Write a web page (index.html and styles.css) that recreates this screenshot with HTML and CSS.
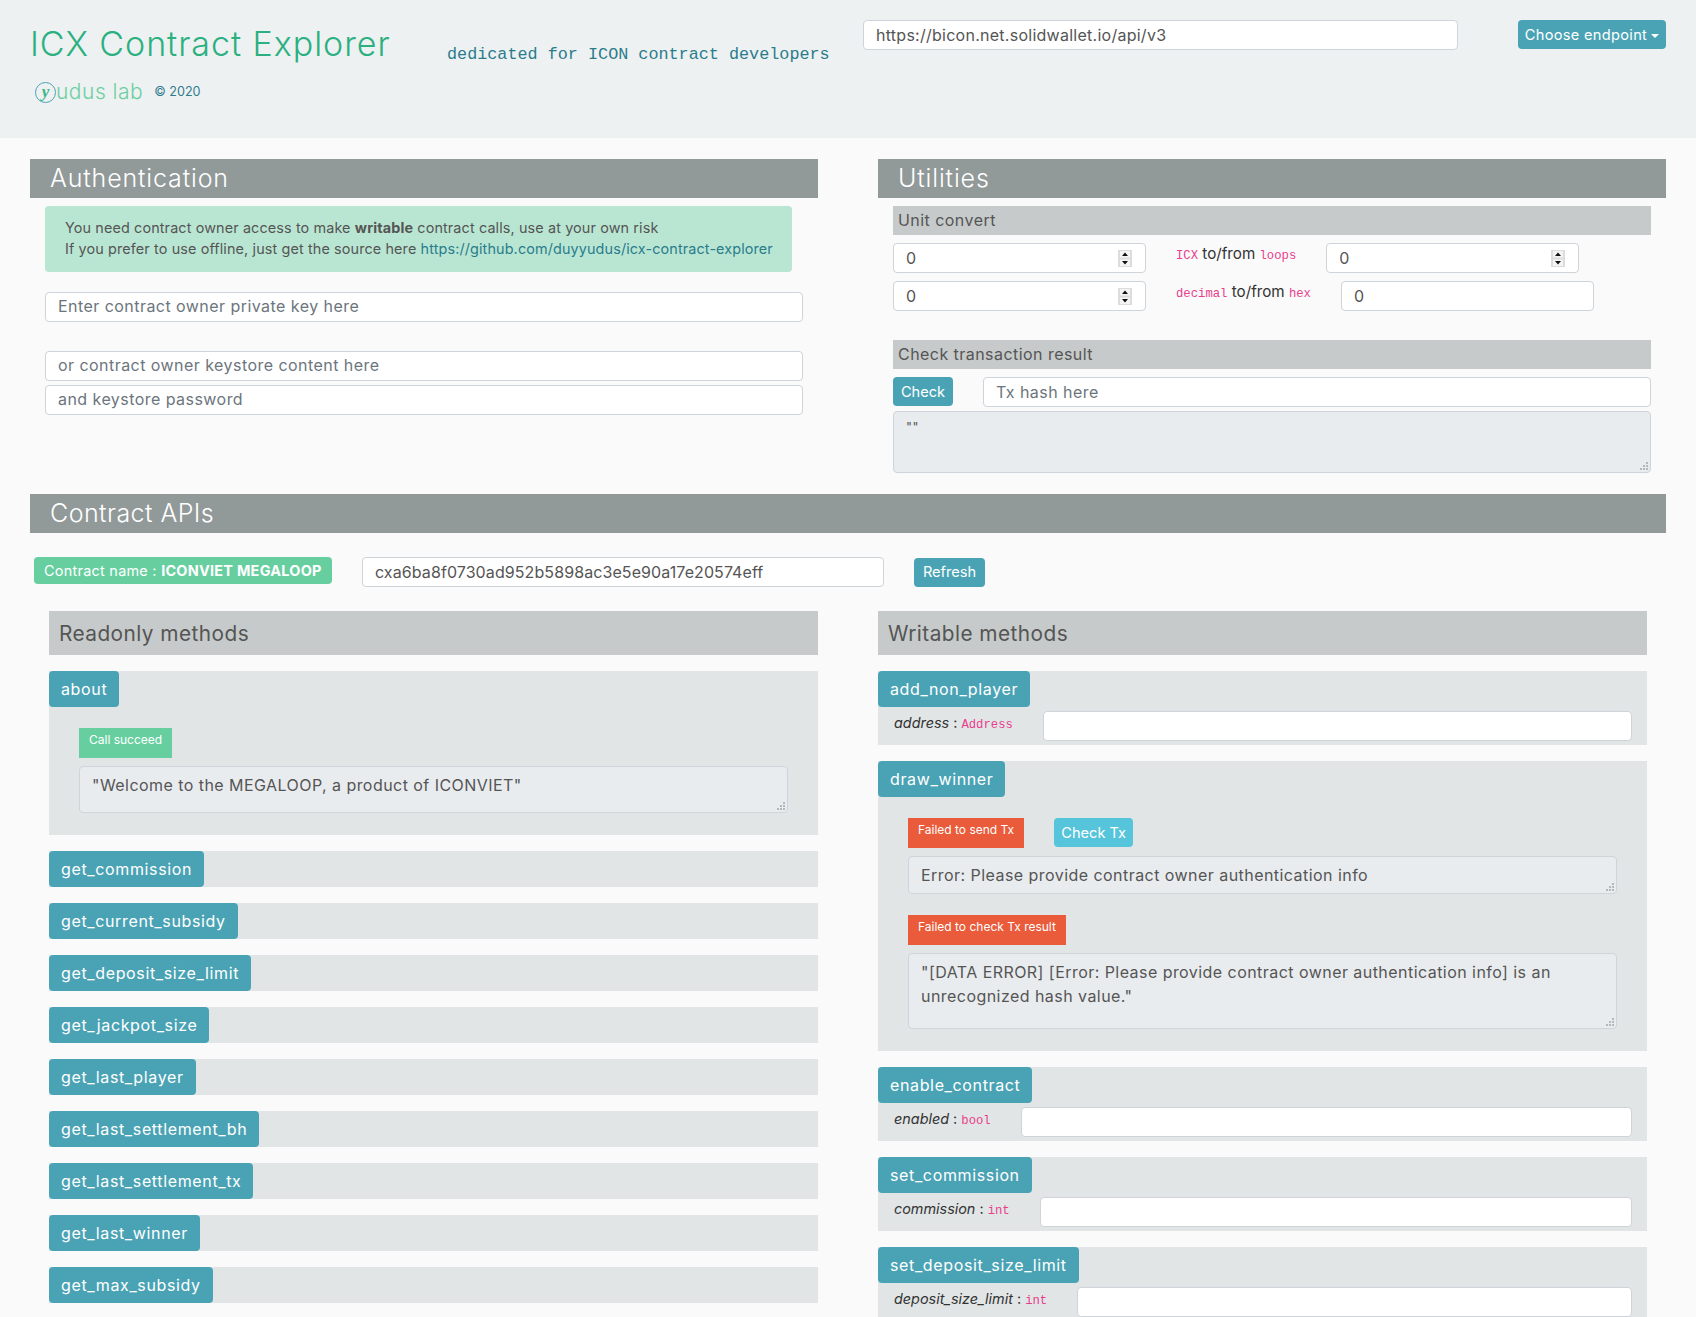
FILE: index.html
```html
<!DOCTYPE html>
<html lang="en">
<head>
<meta charset="utf-8">
<title>ICX Contract Explorer</title>
<link rel="stylesheet" href="styles.css">
</head>
<body>
<header class="top">
  <div class="brand">
    <h1 class="title">ICX Contract Explorer</h1>
    <div class="lab">
      <span class="lab-mark">y</span><span class="lab-name">udus lab</span>
      <small class="copy">© 2020</small>
    </div>
  </div>
  <div class="tagline">dedicated for ICON contract developers</div>
  <input class="field endpoint" type="text" value="https://bicon.net.solidwallet.io/api/v3">
  <button class="btn choose" type="button">Choose endpoint<span class="caret"></span></button>
</header>

<main class="page">
  <div class="cols first">
    <section>
      <h2 class="bar">Authentication</h2>
      <div class="auth">
        <div class="alert">You need contract owner access to make <b>writable</b> contract calls, use at your own risk<br>If you prefer to use offline, just get the source here <a href="#">https://github.com/duyyudus/icx-contract-explorer</a></div>
        <input class="field key" type="text" placeholder="Enter contract owner private key here">
        <input class="field store" type="text" placeholder="or contract owner keystore content here">
        <input class="field pass" type="text" placeholder="and keystore password">
      </div>
    </section>
    <section>
      <h2 class="bar">Utilities</h2>
      <div class="utils">
        <h3 class="sub">Unit convert</h3>
        <div class="conv">
          <div class="spin-wrap">
            <input class="field num" type="number" value="0">
            <svg class="spin" viewBox="0 0 14 17" width="14" height="17" aria-hidden="true"><rect width="14" height="17" fill="#dcdcdc"/><rect x="2" y="1" width="10" height="6.5" fill="#f4f4f4"/><rect x="2" y="9.5" width="10" height="6.5" fill="#f4f4f4"/><path d="M7 2.5 10 6H4z" fill="#111"/><path d="M7 14.5 10 11H4z" fill="#111"/></svg>
          </div>
          <span class="conv-label"><code>ICX</code> to/from <code>loops</code></span>
          <div class="spin-wrap">
            <input class="field num" type="number" value="0">
            <svg class="spin" viewBox="0 0 14 17" width="14" height="17" aria-hidden="true"><rect width="14" height="17" fill="#dcdcdc"/><rect x="2" y="1" width="10" height="6.5" fill="#f4f4f4"/><rect x="2" y="9.5" width="10" height="6.5" fill="#f4f4f4"/><path d="M7 2.5 10 6H4z" fill="#111"/><path d="M7 14.5 10 11H4z" fill="#111"/></svg>
          </div>
        </div>
        <div class="conv">
          <div class="spin-wrap">
            <input class="field num" type="number" value="0">
            <svg class="spin" viewBox="0 0 14 17" width="14" height="17" aria-hidden="true"><rect width="14" height="17" fill="#dcdcdc"/><rect x="2" y="1" width="10" height="6.5" fill="#f4f4f4"/><rect x="2" y="9.5" width="10" height="6.5" fill="#f4f4f4"/><path d="M7 2.5 10 6H4z" fill="#111"/><path d="M7 14.5 10 11H4z" fill="#111"/></svg>
          </div>
          <span class="conv-label"><code>decimal</code> to/from <code>hex</code></span>
          <div class="spin-wrap"><input class="field num" type="text" value="0"></div>
        </div>
        <h3 class="sub check-head">Check transaction result</h3>
        <div class="check-row">
          <button class="btn check" type="button">Check</button>
          <input class="field" type="text" placeholder="Tx hash here">
        </div>
        <textarea class="out small" readonly>""</textarea>
      </div>
    </section>
  </div>

  <h2 class="bar apis">Contract APIs</h2>
  <div class="contract">
    <span class="badge">Contract name : <b>ICONVIET MEGALOOP</b></span>
    <input class="field addr" type="text" value="cxa6ba8f0730ad952b5898ac3e5e90a17e20574eff">
    <button class="btn refresh" type="button">Refresh</button>
  </div>

  <div class="cols">
    <section class="readonly">
      <h3 class="head">Readonly methods</h3>
      <div class="method">
        <button class="btn call" type="button">about</button>
        <div class="result">
          <div class="status-row"><span class="status ok">Call succeed</span></div>
          <textarea class="out a" readonly>"Welcome to the MEGALOOP, a product of ICONVIET"</textarea>
        </div>
      </div>
      <div class="method"><button class="btn call" type="button">get_commission</button></div>
      <div class="method"><button class="btn call" type="button">get_current_subsidy</button></div>
      <div class="method"><button class="btn call" type="button">get_deposit_size_limit</button></div>
      <div class="method"><button class="btn call" type="button">get_jackpot_size</button></div>
      <div class="method"><button class="btn call" type="button">get_last_player</button></div>
      <div class="method"><button class="btn call" type="button">get_last_settlement_bh</button></div>
      <div class="method"><button class="btn call" type="button">get_last_settlement_tx</button></div>
      <div class="method"><button class="btn call" type="button">get_last_winner</button></div>
      <div class="method"><button class="btn call" type="button">get_max_subsidy</button></div>
    </section>
    <section class="writable">
      <h3 class="head">Writable methods</h3>
      <div class="method">
        <button class="btn call" type="button">add_non_player</button>
        <div class="param"><label><i>address</i> : <code>Address</code></label><input class="field" type="text"></div>
      </div>
      <div class="method">
        <button class="btn call" type="button">draw_winner</button>
        <div class="result">
          <div class="status-row"><span class="status bad">Failed to send Tx</span><button class="btn info" type="button">Check Tx</button></div>
          <textarea class="out b" readonly>Error: Please provide contract owner authentication info</textarea>
          <div class="status-row second"><span class="status bad">Failed to check Tx result</span></div>
          <textarea class="out c" readonly>"[DATA ERROR] [Error: Please provide contract owner authentication info] is an unrecognized hash value."</textarea>
        </div>
      </div>
      <div class="method">
        <button class="btn call" type="button">enable_contract</button>
        <div class="param"><label><i>enabled</i> : <code>bool</code></label><input class="field" type="text"></div>
      </div>
      <div class="method">
        <button class="btn call" type="button">set_commission</button>
        <div class="param"><label><i>commission</i> : <code>int</code></label><input class="field" type="text"></div>
      </div>
      <div class="method">
        <button class="btn call" type="button">set_deposit_size_limit</button>
        <div class="param"><label><i>deposit_size_limit</i> : <code>int</code></label><input class="field" type="text"></div>
      </div>
    </section>
  </div>
</main>
</body>
</html>
```
FILE: styles.css
```css
* { box-sizing: border-box; }
html, body { height: 100%; }
body {
  margin: 0;
  height: 100vh;
  overflow: hidden;
  background: #fafafa;
  color: #555;
  font: 400 16px/1.5 "Inter", "Noto Sans", sans-serif;
  letter-spacing: 0.45px;
}
h1, h2, h3 { margin: 0; font-weight: 400; }
code { font-family: "Liberation Mono", monospace; font-size: 12.25px; color: #e83e8c; letter-spacing: 0; }

.top {
  height: 138px;
  background: #eef1f2;
  padding: 20px 30px 0;
  display: flex;
  align-items: flex-start;
}
.brand { width: 417px; }
.title { color: #2bb07f; font: 300 34px/44px "Inter", sans-serif; letter-spacing: 0.95px; margin-top: 2px; }
.lab { display: flex; align-items: center; margin: 14px 0 0 5px; height: 24px; }
.lab-mark {
  width: 21px; height: 21px; border: 1.5px solid #4aa3b5; border-radius: 50%;
  display: flex; align-items: center; justify-content: center; padding-bottom: 2px;
  font: italic 700 17px/1 "Liberation Serif", serif; color: #3fb58a; letter-spacing: 0;
}
.lab-name { color: #6ccfa0; font: 300 21px/24px "Inter", sans-serif; letter-spacing: 0.5px; }
.copy { font-size: 12.6px; color: #2e7c8d; margin-left: 11px; letter-spacing: 0; }
.tagline { width: 416px; margin-top: 23px; font: 16.8px/24px "Liberation Mono", monospace; color: #2a7c8c; letter-spacing: 0; }

.field {
  display: block;
  width: 100%;
  height: 30px;
  padding: 0 12px;
  border: 1px solid #ced4da;
  border-radius: 4px;
  background: #fff;
  color: #555;
  font: inherit;
  letter-spacing: inherit;
}
.field::placeholder { color: #6c757d; opacity: 1; }
.endpoint { width: 595px; flex: none; letter-spacing: 0.26px; }
.num { appearance: textfield; }
.num::-webkit-inner-spin-button { -webkit-appearance: none; }

.btn {
  border: 0;
  border-radius: 4px;
  background: #4aa3b5;
  color: #fff;
  font: inherit;
  letter-spacing: inherit;
  padding: 0 8px;
  height: 29px;
  flex: none;
}
.choose { margin-left: 60px; width: 148px; padding: 2px 0 0; font-size: 14.6px; letter-spacing: 0.3px; }
.caret {
  display: inline-block; margin-left: 4px; vertical-align: 2px;
  border-top: 4px solid #fff; border-left: 4px solid transparent; border-right: 4px solid transparent;
}

.page { padding: 21px 30px 0; }
.cols { display: grid; grid-template-columns: 788px 788px; column-gap: 60px; }
.bar { height: 39px; padding-left: 20px; background: #919999; color: #fff; font-size: 25px; line-height: 39px; letter-spacing: 0.85px; font-weight: 300; }

.auth { padding: 8px 15px 0; }
.auth .field { padding-bottom: 2px; }
.alert {
  height: 66px; width: 747px; padding: 11px 20px; border-radius: 4px;
  background: #b9e6d3; font-size: 14.4px; line-height: 21px; letter-spacing: 0.12px; white-space: nowrap;
}
.alert a { color: #2a7c8c; text-decoration: none; }
.key { margin-top: 20px; }
.store { margin-top: 29px; }
.pass { margin-top: 4px; }

.utils { padding: 8px 15px 0; }
.sub { height: 29px; padding-left: 5px; background: #c6caca; font-size: 16px; line-height: 28px; }
.conv { display: flex; align-items: center; gap: 30px; margin-top: 8px; }
.spin-wrap { position: relative; width: 253px; flex: none; }
.spin { position: absolute; right: 14px; top: 7px; display: block; }
.conv-label { font-size: 15.2px; line-height: 20px; color: #333; letter-spacing: 0; margin-top: -6px; white-space: nowrap; }
.check-head { margin-top: 29px; }
.check-row { display: flex; gap: 30px; margin-top: 8px; }
.check { width: 60px; padding: 2px 0 0; font-size: 14.6px; letter-spacing: 0; }
.out {
  display: block; width: 100%; padding: 6px 12px; border: 1px solid #ced4da; border-radius: 4px;
  background: #e9ecef; color: #555; font: inherit; letter-spacing: inherit; resize: vertical;
}
.out::-webkit-resizer {
  background:
    linear-gradient(#b4b8ba, #b4b8ba) right 2px bottom 2px / 2px 2px no-repeat,
    linear-gradient(#b4b8ba, #b4b8ba) right 5px bottom 2px / 2px 2px no-repeat,
    linear-gradient(#b4b8ba, #b4b8ba) right 8px bottom 2px / 2px 2px no-repeat,
    linear-gradient(#b4b8ba, #b4b8ba) right 2px bottom 5px / 2px 2px no-repeat,
    linear-gradient(#b4b8ba, #b4b8ba) right 5px bottom 5px / 2px 2px no-repeat,
    linear-gradient(#b4b8ba, #b4b8ba) right 2px bottom 8px / 2px 2px no-repeat;
}
.small { height: 62px; margin-top: 4px; font-size: 12.8px; }

.apis { margin-top: 21px; letter-spacing: 0.45px; }
.contract { display: flex; align-items: flex-start; gap: 30px; margin: 24px 0 24px 4px; }
.badge {
  height: 27px; width: 298px; padding: 0 10px; border-radius: 4px; background: #67cf9f; color: #fff;
  font-size: 14.4px; line-height: 28px; letter-spacing: 0.28px; white-space: nowrap;
}
.addr { width: 522px; flex: none; letter-spacing: 0.09px; }
.refresh { width: 71px; padding: 1px 0 0; margin-top: 1px; font-size: 14.6px; letter-spacing: 0; }

.readonly { padding-left: 19px; }
.writable { padding-right: 19px; }
.head { height: 44px; padding-left: 10px; background: #c6caca; font-size: 20.8px; line-height: 45px; margin-bottom: 16px; letter-spacing: 0.45px; }
.method { background: #e1e5e6; margin-bottom: 16px; min-height: 36px; }
.call { display: block; height: 36px; padding: 0 12px; letter-spacing: 0.64px; }
.param { display: flex; gap: 30px; padding: 4px 15px 4px 16px; height: 38px; }
.param label { font-size: 14.4px; line-height: 24px; color: #333; letter-spacing: 0; white-space: nowrap; }
.param .field { flex: 1; min-width: 0; }

.result { padding: 21px 30px 22px; }
.status-row { display: flex; gap: 30px; align-items: flex-start; }
.second { margin-top: 21px; }
.status { height: 30px; padding: 3px 10px 0; font-size: 12px; line-height: 18px; color: #fff; letter-spacing: 0; white-space: nowrap; }
.ok { background: #67cf9f; }
.bad { background: #e95b3a; }
.info { background: #56c4db; width: 79px; padding: 2px 0 0; font-size: 14.6px; letter-spacing: 0; }
.out.a { height: 47px; margin-top: 8px; }
.out.b { height: 38px; margin-top: 8px; }
.out.c { height: 76px; margin-top: 8px; }
```
